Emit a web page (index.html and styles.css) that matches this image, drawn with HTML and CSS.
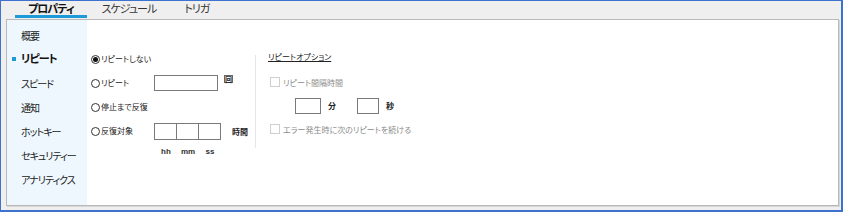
FILE: index.html
```html
<!DOCTYPE html>
<html lang="ja">
<head>
<meta charset="utf-8">
<link rel="stylesheet" href="styles.css">
</head>
<body>
<div class="window">
  <div class="tabs">
    <div class="tab active">プロパティ</div>
    <div class="tab">スケジュール</div>
    <div class="tab">トリガ</div>
  </div>
  <div class="panel">
    <nav class="sidebar">
      <div class="nav-item first">概要</div>
      <div class="nav-item current">リピート</div>
      <div class="nav-item">スピード</div>
      <div class="nav-item">通知</div>
      <div class="nav-item">ホットキー</div>
      <div class="nav-item">セキュリティー</div>
      <div class="nav-item">アナリティクス</div>
    </nav>
    <section class="repeat">
      <div class="row">
        <span class="radio checked"></span><span class="label">リピートしない</span>
      </div>
      <div class="row">
        <span class="radio"></span><span class="label fixed">リピート</span>
        <span class="box wide"></span><span class="unit-icon">回</span>
      </div>
      <div class="row">
        <span class="radio"></span><span class="label">停止まで反復</span>
      </div>
      <div class="row">
        <span class="radio"></span><span class="label fixed">反復対象</span>
        <span class="boxes"><span class="box cell"></span><span class="box cell"></span><span class="box cell"></span></span>
        <span class="unit">時間</span>
      </div>
      <div class="hms">
        <span>hh</span><span>mm</span><span>ss</span>
      </div>
    </section>
    <div class="divider"></div>
    <section class="options">
      <div class="opt-title">リピートオプション</div>
      <div class="opt-row">
        <span class="check"></span><span class="muted">リピート間隔時間</span>
      </div>
      <div class="opt-row times">
        <span class="box small"></span><span class="unit-s">分</span>
        <span class="box small narrow"></span><span class="unit-s">秒</span>
      </div>
      <div class="opt-row">
        <span class="check"></span><span class="muted">エラー発生時に次のリピートを続ける</span>
      </div>
    </section>
  </div>
</div>
</body>
</html>
```
FILE: styles.css
```css
* { box-sizing: border-box; }
html, body { margin: 0; padding: 0; }
body {
  width: 843px;
  height: 212px;
  overflow: hidden;
  font-family: "Noto Sans CJK JP", "Noto Sans", sans-serif;
  font-feature-settings: "palt";
  color: #222;
  background: #fff;
}
.window {
  width: 843px;
  height: 212px;
  background: #efefef;
  border-top: 1px solid #3d72cf;
  border-left: 1px solid #3d72cf;
  border-right: 2px solid #3d72cf;
  border-bottom: 2px solid #3d72cf;
  display: flex;
  flex-direction: column;
}
.tabs {
  display: flex;
  height: 17px;
  margin-bottom: 1px;
  padding-left: 14px;
}
.tab {
  padding: 0 13px;
  font-size: 11px;
  letter-spacing: -1px;
  line-height: 15px;
  color: #333;
  border-bottom: 2px solid transparent;
}
.tab + .tab { margin-left: 2px; }
.tab.active {
  font-weight: 700;
  color: #111;
  border-bottom: 3px solid #1e9ad8;
  line-height: 15px;
}
.panel {
  flex: 1;
  margin: 0 2px 4px 5px;
  background: #fff;
  border: 1px solid #b9b9b9;
  box-shadow: 1px 1px 0 #d6d6d6;
  display: flex;
}
.sidebar {
  width: 80px;
  background: #eef7fd;
  padding-top: 5px;
}
.nav-item {
  height: 24px;
  line-height: 24px;
  font-size: 10px;
  letter-spacing: -1px;
  padding-left: 14px;
  color: #222;
  position: relative;
}
.nav-item.first {
  height: 22px;
  line-height: 22px;
}
.nav-item.current {
  font-weight: 700;
  font-size: 11px;
  color: #111;
  line-height: 23px;
  height: 25px;
}
.nav-item.current::before {
  content: "";
  position: absolute;
  left: 5px;
  top: 10px;
  width: 4px;
  height: 4px;
  background: #1e9ad8;
}
.repeat {
  width: 168px;
  padding: 27px 0 0 4px;
}
.row {
  height: 24px;
  display: flex;
  align-items: center;
}
.radio {
  width: 9px;
  height: 9px;
  border: 1px solid #333;
  border-radius: 50%;
  background: #fff;
  display: flex;
  align-items: center;
  justify-content: center;
  flex: none;
}
.radio.checked::after {
  content: "";
  width: 5px;
  height: 5px;
  border-radius: 50%;
  background: #111;
}
.label {
  font-size: 8px;
  margin-left: 1px;
  line-height: 10px;
}
.label.fixed { width: 53px; }
.box {
  display: inline-block;
  border: 1px solid #7a7a7a;
  background: #fff;
}
.box.wide {
  width: 64px;
  height: 16px;
}
.unit-icon {
  font-size: 7px;
  font-weight: 700;
  margin-left: 6px;
  align-self: flex-start;
  margin-top: 4px;
  border: 1px solid #666;
  line-height: 6px;
  padding: 0;
}
.boxes {
  display: flex;
}
.box.cell {
  width: 23px;
  height: 17px;
}
.box.cell + .box.cell { margin-left: -1px; }
.unit {
  font-size: 8px;
  font-weight: 700;
  margin-left: 11px;
}
.hms {
  display: flex;
  padding-left: 64px;
  font-family: "Liberation Sans", Arial, sans-serif;
  font-size: 8px;
  font-weight: 700;
  color: #333;
  margin-top: 4px;
}
.hms span { width: 22px; text-align: center; }
.divider {
  width: 1px;
  background: #e6e6e6;
  margin-top: 35px;
  height: 93px;
}
.options {
  padding: 31px 0 0 12px;
}
.opt-title {
  font-size: 8px;
  text-decoration: underline;
  line-height: 12px;
  height: 19px;
}
.opt-row {
  height: 24px;
  display: flex;
  align-items: center;
  padding-left: 2px;
}
.check {
  width: 10px;
  height: 10px;
  border: 1px solid #cfcfcf;
  background: #fff;
  margin-right: 3px;
  flex: none;
}
.muted {
  font-size: 8px;
  color: #8c8c8c;
}
.opt-row.times { padding-left: 27px; height: 23px; }
.box.small {
  width: 26px;
  height: 16px;
}
.box.small.narrow { width: 22px; }
.unit-s {
  font-size: 8px;
  font-weight: 700;
  margin-left: 7px;
  margin-right: 21px;
}
```
